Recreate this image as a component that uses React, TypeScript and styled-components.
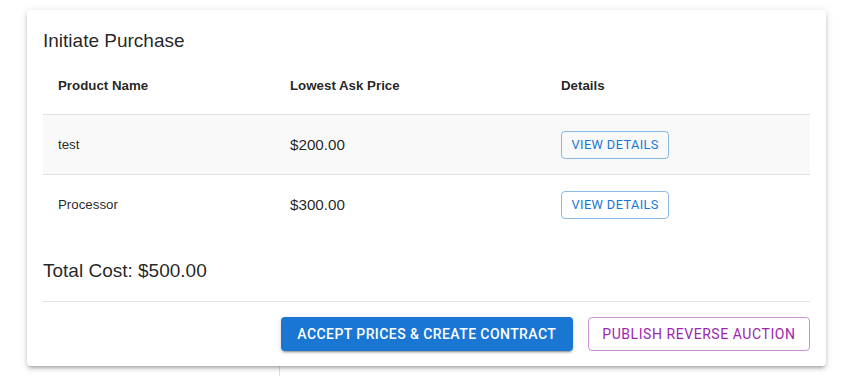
import React from "react";
import styled, { createGlobalStyle } from "styled-components";

const GlobalStyle = createGlobalStyle`
  body {
    margin: 0;
    background: #ffffff;
    font-family: "Liberation Sans", Arial, sans-serif;
  }
`;

type Item = { name: string; price: string };

const items: Item[] = [
  { name: "test", price: "$200.00" },
  { name: "Processor", price: "$300.00" },
];

function App() {
  return (
    <>
      <GlobalStyle />
      <Page>
        <Card>
          <Title>Initiate Purchase</Title>
          <Table>
            <HeadRow>
              <HeadCell>Product Name</HeadCell>
              <HeadCell>Lowest Ask Price</HeadCell>
              <HeadCell>Details</HeadCell>
            </HeadRow>
            {items.map((item, i) => (
              <BodyRow key={item.name} $shaded={i === 0}>
                <NameCell>{item.name}</NameCell>
                <PriceCell>{item.price}</PriceCell>
                <Cell>
                  <SmallButton>View Details</SmallButton>
                </Cell>
              </BodyRow>
            ))}
          </Table>
          <Total>Total Cost: $500.00</Total>
          <Divider />
          <Actions>
            <ContainedButton>Accept Prices &amp; Create Contract</ContainedButton>
            <OutlinedButton>Publish Reverse Auction</OutlinedButton>
          </Actions>
        </Card>
        <Behind />
      </Page>
    </>
  );
}

const Page = styled.div`
  padding: 10px 0 0 27px;
`;

const Card = styled.div`
  width: 799px;
  box-sizing: border-box;
  padding: 14px 16px 15px 16px;
  background: #fff;
  border-radius: 4px;
  box-shadow: 0px 3px 3px -2px rgba(0, 0, 0, 0.2),
    0px 3px 4px 0px rgba(0, 0, 0, 0.14), 0px 1px 8px 0px rgba(0, 0, 0, 0.12);
  position: relative;
  z-index: 1;
`;

const Title = styled.h2`
  margin: 0;
  font-size: 19px;
  font-weight: 400;
  line-height: 34px;
  color: rgba(0, 0, 0, 0.87);
`;

const Table = styled.div`
  display: flex;
  flex-direction: column;
`;

const Row = styled.div`
  display: grid;
  grid-template-columns: 232px 271px 1fr;
  align-items: center;
  border-bottom: 1px solid rgb(224, 224, 224);
`;

const HeadRow = styled(Row)`
  height: 56px;
`;

const BodyRow = styled(Row)<{ $shaded?: boolean }>`
  height: 59px;
  background: ${(p) => (p.$shaded ? "#f9f9f9" : "transparent")};

  &:last-child {
    border-bottom-color: transparent;
  }
`;

const Cell = styled.div`
  padding: 0 15px;
  color: rgba(0, 0, 0, 0.87);
  font-size: 13.3px;
  line-height: 20px;
`;

const HeadCell = styled(Cell)`
  font-weight: 700;
`;

const NameCell = styled(Cell)``;

const PriceCell = styled(Cell)`
  font-size: 15.2px;
`;

const ButtonBase = styled.button`
  font-family: Roboto, "Liberation Sans", sans-serif;
  font-weight: 500;
  text-transform: uppercase;
  letter-spacing: 0.03em;
  border-radius: 4px;
  cursor: pointer;
  display: inline-flex;
  align-items: center;
  justify-content: center;
  box-sizing: border-box;
`;

const SmallButton = styled(ButtonBase)`
  height: 28px;
  padding: 0 9.5px;
  font-size: 12.8px;
  font-weight: 400;
  color: #1976d2;
  background: transparent;
  border: 1px solid rgba(25, 118, 210, 0.5);
`;

const Total = styled.div`
  margin-top: 20px;
  font-size: 19px;
  line-height: 32px;
  color: rgba(0, 0, 0, 0.87);
`;

const Divider = styled.hr`
  margin: 14px 0 15px 0;
  border: none;
  border-top: 1px solid rgb(224, 224, 224);
`;

const Actions = styled.div`
  display: flex;
  justify-content: flex-end;
  gap: 15px;
`;

const ContainedButton = styled(ButtonBase)`
  height: 34px;
  padding: 0 16.5px;
  font-size: 14px;
  color: #fff;
  background: #1976d2;
  border: none;
  box-shadow: 0px 3px 1px -2px rgba(0, 0, 0, 0.2),
    0px 2px 2px 0px rgba(0, 0, 0, 0.14), 0px 1px 5px 0px rgba(0, 0, 0, 0.12);
`;

const OutlinedButton = styled(ButtonBase)`
  height: 34px;
  padding: 0 13.5px;
  font-size: 14px;
  font-weight: 400;
  letter-spacing: 0.04em;
  color: #9c27b0;
  background: transparent;
  border: 1px solid rgba(156, 39, 176, 0.5);
`;

const Behind = styled.div`
  margin-left: 252px;
  height: 20px;
  border-left: 1px solid rgb(224, 224, 224);
`;

export default App;
